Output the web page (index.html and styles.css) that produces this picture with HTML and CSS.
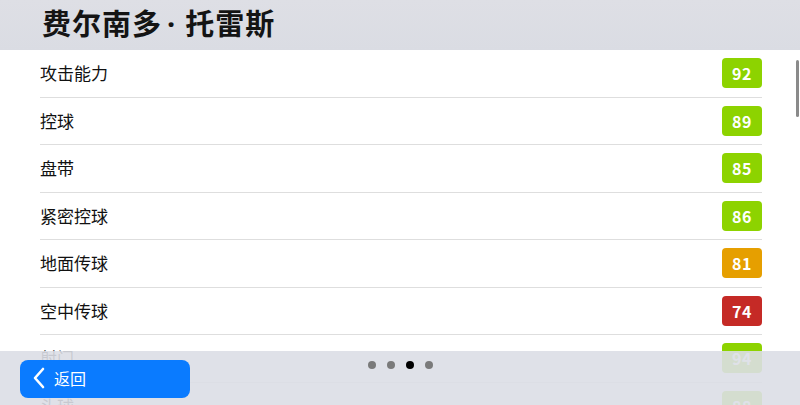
FILE: index.html
```html
<!DOCTYPE html>
<html lang="zh-CN">

<head>
    <meta charset="UTF-8">
    <meta name="viewport" content="width=device-width, initial-scale=1.0">
    <title>球员能力</title>
    <link rel="stylesheet" href="styles.css">
</head>

<body>
    <div class="screen">
        <header class="top-bar">
            <h1>费尔南多<span class="name-dot">·</span>托雷斯</h1>
        </header>

        <div class="stat-list">
            <div class="stat-row">
                <span class="stat-name">攻击能力</span>
                <span class="badge badge-high">92</span>
            </div>
            <div class="stat-row">
                <span class="stat-name">控球</span>
                <span class="badge badge-high">89</span>
            </div>
            <div class="stat-row">
                <span class="stat-name">盘带</span>
                <span class="badge badge-high">85</span>
            </div>
            <div class="stat-row">
                <span class="stat-name">紧密控球</span>
                <span class="badge badge-high">86</span>
            </div>
            <div class="stat-row">
                <span class="stat-name">地面传球</span>
                <span class="badge badge-mid">81</span>
            </div>
            <div class="stat-row">
                <span class="stat-name">空中传球</span>
                <span class="badge badge-low">74</span>
            </div>
            <div class="stat-row">
                <span class="stat-name">射门</span>
                <span class="badge badge-high">94</span>
            </div>
            <div class="stat-row">
                <span class="stat-name">头球</span>
                <span class="badge badge-high">88</span>
            </div>
        </div>

        <div class="scroll-thumb"></div>

        <footer class="bottom-bar">
            <button class="back-btn" type="button">
                <svg class="back-icon" width="12" height="22" viewBox="0 0 12 22">
                    <path d="M10 2 L2 11 L10 20" fill="none" stroke="#fff" stroke-width="2.6"
                        stroke-linecap="round" stroke-linejoin="round" />
                </svg>
                <span>返回</span>
            </button>
            <div class="pager">
                <span class="dot"></span>
                <span class="dot"></span>
                <span class="dot active"></span>
                <span class="dot"></span>
            </div>
        </footer>
    </div>
</body>

</html>
```

FILE: styles.css
```css
:root {
    --bar-color: #dcdee5;
    --text-color: #111111;
    --line-color: #dedede;
    --blue: #0a7bff;
    --green: #8dd300;
    --orange: #e69f00;
    --red: #c52a26;
}

html,
body {
    margin: 0;
    height: 100%;
    overflow: hidden;
}

body {
    font-family: "Noto Sans CJK SC", "Noto Sans", sans-serif;
    color: var(--text-color);
    background: #ffffff;
}

.screen {
    position: relative;
    width: 800px;
    height: 405px;
    overflow: hidden;
}

.top-bar {
    height: 50px;
    background: linear-gradient(180deg, #dedfe5 0%, #dadce3 100%);
    padding-left: 42px;
    display: flex;
    align-items: center;
}

.top-bar h1 {
    margin: 0;
    margin-top: -6px;
    font-size: 29px;
    font-weight: 700;
    letter-spacing: 1px;
    color: #141414;
}

/* the CJK font draws a full-width dot, the original is narrow */
.name-dot {
    font-family: "Noto Sans", sans-serif;
    padding: 0 9px 0 5px;
}

.stat-list {
    margin: 0 38px 0 40px;
}

.stat-row {
    box-sizing: border-box;
    height: 47.5px;
    border-bottom: 1px solid var(--line-color);
    display: flex;
    align-items: center;
    justify-content: space-between;
}

.stat-name {
    font-size: 17px;
    margin-top: -1px;
}

.badge {
    width: 40px;
    height: 30px;
    border-radius: 4px;
    color: #ffffff;
    font-weight: 700;
    font-size: 16px;
    display: flex;
    align-items: center;
    justify-content: center;
    letter-spacing: 0.5px;
}

.badge-high {
    background: var(--green);
}

.badge-mid {
    background: var(--orange);
}

.badge-low {
    background: var(--red);
}

.scroll-thumb {
    position: absolute;
    top: 60px;
    right: 1px;
    width: 3px;
    height: 57px;
    border-radius: 2px;
    background: #8a8a8a;
}

.bottom-bar {
    position: absolute;
    left: 0;
    right: 0;
    bottom: 0;
    height: 54px;
    background: rgba(220, 222, 230, 0.9);
}

.back-btn {
    position: absolute;
    left: 20px;
    top: 9px;
    width: 170px;
    height: 38px;
    border: none;
    border-radius: 8px;
    background: var(--blue);
    color: #ffffff;
    font-family: inherit;
    font-size: 16px;
    display: flex;
    align-items: center;
    gap: 9px;
    padding: 0 0 0 13px;
}

.back-icon {
    margin-top: -2px;
}

.back-btn span {
    margin-top: -2px;
}

.pager {
    position: absolute;
    top: 10px;
    left: 368px;
    display: flex;
    gap: 11px;
}

.dot {
    width: 8px;
    height: 8px;
    border-radius: 50%;
    background: #7a7a7a;
}

.dot.active {
    background: #000000;
}
```
